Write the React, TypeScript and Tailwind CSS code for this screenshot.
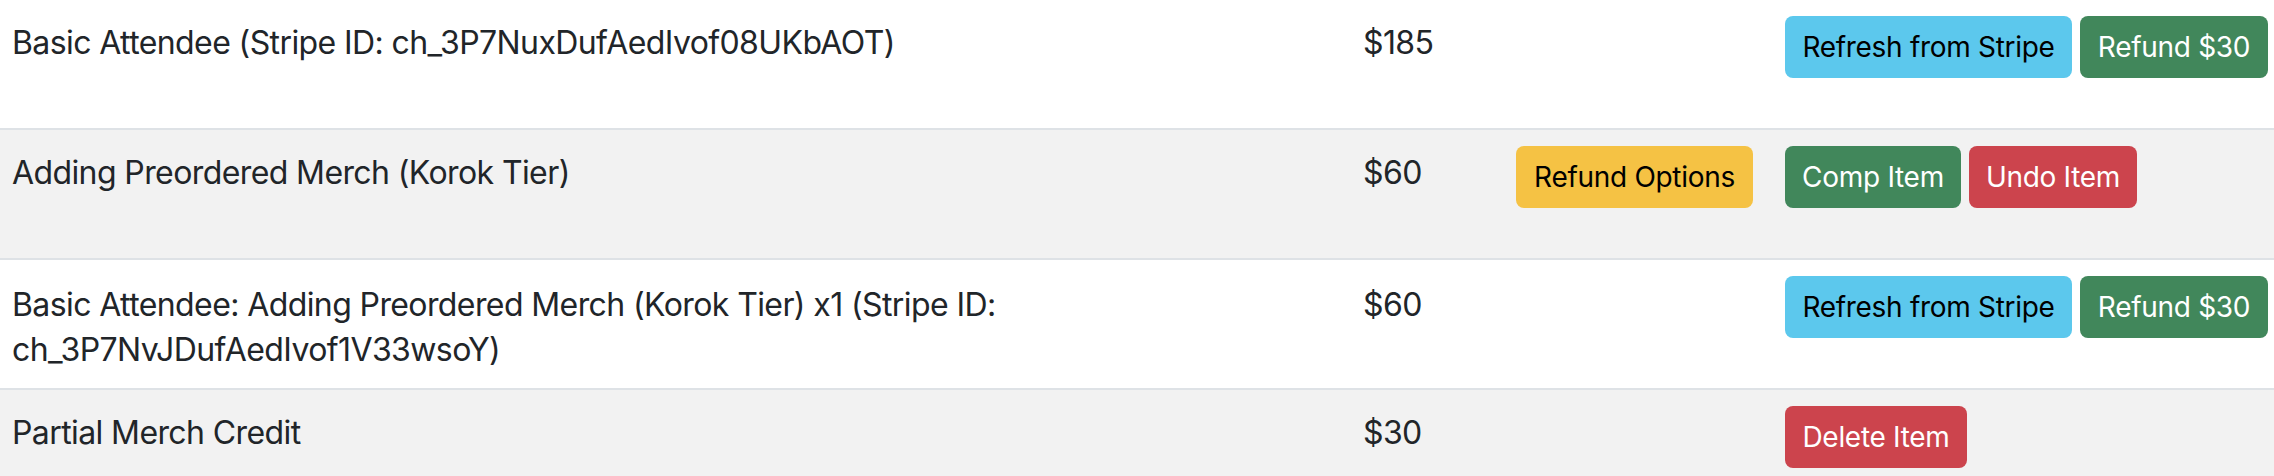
import React from 'react'

type Btn = { label: string; tone: 'info' | 'success' | 'danger' | 'warning'; w: string }

const tones = {
  info: 'bg-[#5cc8ed] text-black',
  success: 'bg-[#41875b] text-white',
  danger: 'bg-[#cc444d] text-white',
  warning: 'bg-[#f5c244] text-black',
}

type Row = {
  desc: React.ReactNode
  price: string
  middle?: Btn
  actions: Btn[]
  striped?: boolean
  pad?: string
}

const rows: Row[] = [
  {
    desc: 'Basic Attendee (Stripe ID: ch_3P7NuxDufAedIvof08UKbAOT)',
    price: '$185',
    actions: [
      { label: 'Refresh from Stripe', tone: 'info', w: 'w-[287px]' },
      { label: 'Refund $30', tone: 'success', w: 'w-[188px]' },
    ],
  },
  {
    desc: 'Adding Preordered Merch (Korok Tier)',
    price: '$60',
    middle: { label: 'Refund Options', tone: 'warning', w: 'w-[237px]' },
    actions: [
      { label: 'Comp Item', tone: 'success', w: 'w-[176px]' },
      { label: 'Undo Item', tone: 'danger', w: 'w-[168px]' },
    ],
    striped: true,
  },
  {
    desc: (
      <>
        Basic Attendee: Adding Preordered Merch (Korok Tier) x1 (Stripe ID:
        <br />
        ch_3P7NvJDufAedIvof1V33wsoY)
      </>
    ),
    price: '$60',
    actions: [
      { label: 'Refresh from Stripe', tone: 'info', w: 'w-[287px]' },
      { label: 'Refund $30', tone: 'success', w: 'w-[188px]' },
    ],
    pad: 'pt-[22px]',
  },
  {
    desc: 'Partial Merch Credit',
    price: '$30',
    actions: [{ label: 'Delete Item', tone: 'danger', w: 'w-[182px]' }],
    striped: true,
  },
]

function Button({ b }: { b: Btn }) {
  return (
    <button
      className={`h-[62px] ${b.w} shrink-0 rounded-[8px] text-center text-[28px] leading-[42px] tracking-[-0.3px] whitespace-nowrap ${tones[b.tone]}`}
    >
      {b.label}
    </button>
  )
}

export default function App() {
  return (
    <div className="w-[2274px] h-[476px] overflow-hidden bg-white text-[#212529] font-['Inter','Noto_Sans',sans-serif]">
      {rows.map((row, i) => (
        <div
          key={i}
          className={`grid grid-cols-[1347px_153px_269px_1fr] h-[130px] border-b-2 border-[#dee2e6] ${row.striped ? 'bg-[#f2f2f2]' : 'bg-white'}`}
        >
          <div className={`pl-[12px] ${row.pad ?? 'pt-[20px]'} text-[32px] leading-[45px] tracking-[-0.6px]`}>
            {row.desc}
          </div>
          <div className={`pl-[16px] ${row.pad ?? 'pt-[20px]'} text-[32px] leading-[45px] tracking-[-0.6px]`}>
            {row.price}
          </div>
          <div className="pl-[16px] pt-[16px]">{row.middle && <Button b={row.middle} />}</div>
          <div className="pl-[16px] pt-[16px] flex gap-[8px]">
            {row.actions.map((b) => (
              <Button key={b.label} b={b} />
            ))}
          </div>
        </div>
      ))}
    </div>
  )
}
